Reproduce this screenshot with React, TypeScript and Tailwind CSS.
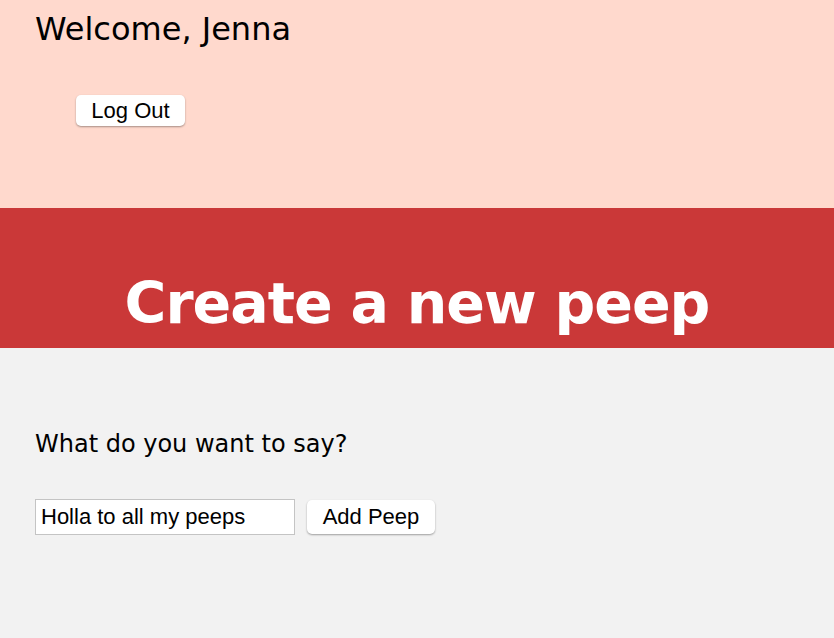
export default function App() {
  return (
    <div className="min-h-[638px] bg-[#f2f2f2] font-['DejaVu_Sans',sans-serif] text-black">
      <header className="h-[208px] bg-[#ffd9cd] px-[35px] pt-[10px]">
        <h2 className="text-[32px] leading-[38px]">Welcome, Jenna</h2>
        <div className="mt-[47px] pl-[41px]">
          <button className="h-[31px] w-[109px] rounded-[5px] bg-white font-['Liberation_Sans',sans-serif] text-[22px] leading-none shadow-[0_1px_2px_rgba(0,0,0,0.35)]">
            Log Out
          </button>
        </div>
      </header>

      <section className="flex h-[140px] items-end justify-center bg-[#ca3838] pb-[12px]">
        <h1 className="text-[57px] font-bold leading-[66px] tracking-[-1px] text-white">
          Create a new peep
        </h1>
      </section>

      <main className="px-[35px] pt-[82px]">
        <p className="text-[24px] leading-[28px]">What do you want to say?</p>
        <form
          className="mt-[41px] flex items-center gap-[12px]"
          onSubmit={(e) => e.preventDefault()}
        >
          <input
            type="text"
            defaultValue="Holla to all my peeps"
            className="h-[36px] w-[260px] border border-[#c4c4c4] bg-white px-[5px] font-['Liberation_Sans',sans-serif] text-[22px] outline-none"
          />
          <button
            type="submit"
            className="h-[34px] w-[128px] rounded-[5px] bg-white font-['Liberation_Sans',sans-serif] text-[22px] leading-none shadow-[0_1px_2px_rgba(0,0,0,0.35)]"
          >
            Add Peep
          </button>
        </form>
      </main>
    </div>
  );
}
